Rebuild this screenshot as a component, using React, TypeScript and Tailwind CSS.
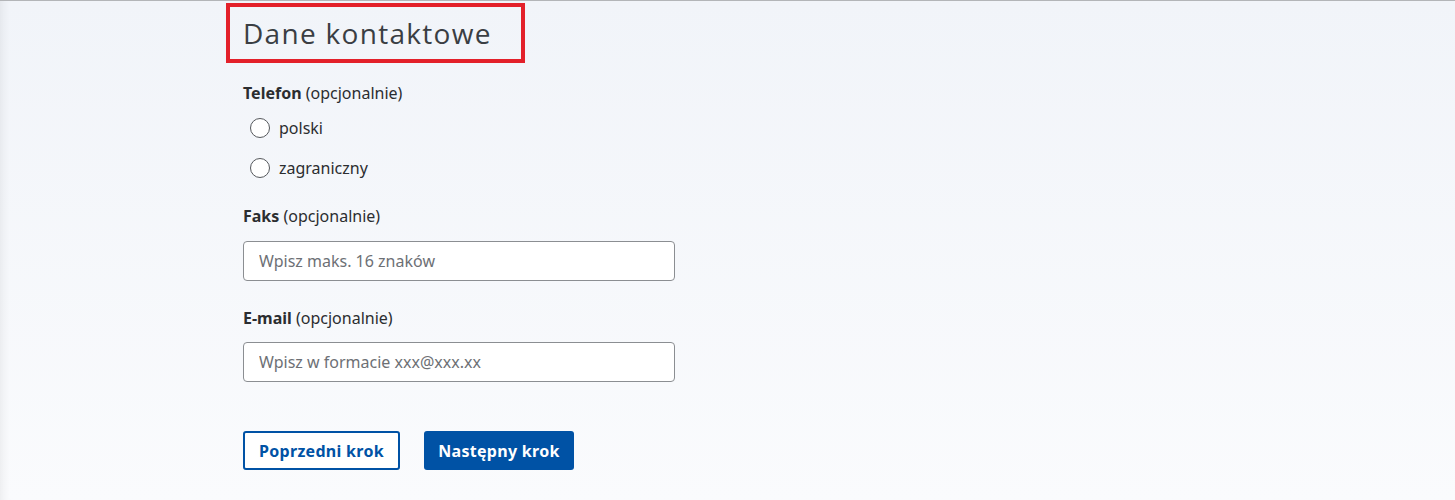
import React from 'react';

export default function App() {
  const body = { fontFamily: '"Noto Sans", "Open Sans", sans-serif' };

  return (
    <div
      className="min-h-[500px] w-full border-t border-[#b3b5b8] bg-gradient-to-b from-[#f1f4f9] to-[#fafbfd] shadow-[inset_10px_0_10px_-8px_rgba(0,0,0,0.07)] text-[#2b2d30]"
      style={body}
    >
      <div className="pl-[226px] pt-[2px]">
        {/* Heading in red frame */}
        <div className="flex h-[60px] w-[299px] items-center border-4 border-[#e3202a] px-[13px]">
          <h2
            className="text-[28px] font-normal leading-none tracking-[1.3px] text-[#3a3e43]"
            style={{ fontFamily: '"Open Sans", "Noto Sans", sans-serif' }}
          >
            Dane kontaktowe
          </h2>
        </div>

        <form className="flex flex-col pl-[17px] pt-[18px]">
          {/* Telefon */}
          <div className="text-base leading-6">
            <span className="font-bold">Telefon</span> (opcjonalnie)
          </div>
          <div className="mt-[3px] flex flex-col">
            {['polski', 'zagraniczny'].map((opt) => (
              <label key={opt} className="flex h-10 items-center gap-[9px] pl-[7px] text-base">
                <span className="h-5 w-5 rounded-full border border-[#55585c] bg-white" />
                {opt}
              </label>
            ))}
          </div>

          {/* Faks */}
          <div className="mt-4 text-base leading-6">
            <span className="font-bold">Faks</span> (opcjonalnie)
          </div>
          <input
            className="mt-[13px] h-10 w-[432px] rounded border border-[#8b8e92] bg-white px-[15px] text-base placeholder:text-[#6d7075]"
            placeholder="Wpisz maks. 16 znaków"
          />

          {/* E-mail */}
          <div className="mt-[25px] text-base leading-6">
            <span className="font-bold">E-mail</span> (opcjonalnie)
          </div>
          <input
            className="mt-3 h-10 w-[432px] rounded border border-[#8b8e92] bg-white px-[15px] text-base placeholder:text-[#6d7075]"
            placeholder="Wpisz w formacie xxx@xxx.xx"
          />

          {/* Buttons */}
          <div className="mt-[49px] flex gap-6">
            <button
              type="button"
              className="h-[39px] w-[157px] rounded-[3px] border-2 border-[#0052a5] bg-white text-base font-bold tracking-[0.3px] text-[#0052a5]"
            >
              Poprzedni krok
            </button>
            <button
              type="button"
              className="h-[39px] w-[150px] rounded-[3px] bg-[#0052a5] text-base font-bold tracking-[0.3px] text-white"
            >
              Następny krok
            </button>
          </div>
        </form>
      </div>
    </div>
  );
}
